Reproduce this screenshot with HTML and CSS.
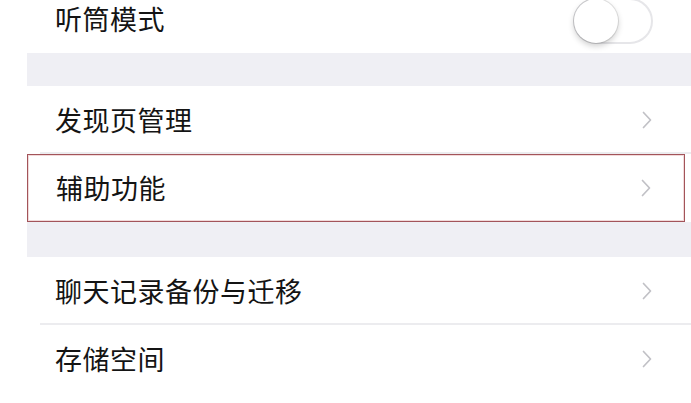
FILE: index.html
```html
<!DOCTYPE html>
<html lang="zh">
<head>
<meta charset="utf-8">
<link rel="stylesheet" href="styles.css">
</head>
<body>
<div class="list">
  <div class="row first">
    <span class="label">听筒模式</span>
    <span class="toggle"><span class="knob"></span></span>
  </div>
  <div class="band first-band"></div>
  <div class="row sep">
    <span class="label">发现页管理</span>
    <svg class="chev" viewBox="0 0 10 18" width="10" height="18"><path d="M1.5 1.5 L8.5 9 L1.5 16.5" fill="none" stroke="#c1c1c6" stroke-width="1.7" stroke-linecap="round" stroke-linejoin="round"/></svg>
  </div>
  <div class="row highlight">
    <span class="label">辅助功能</span>
    <svg class="chev" viewBox="0 0 10 18" width="10" height="18"><path d="M1.5 1.5 L8.5 9 L1.5 16.5" fill="none" stroke="#c1c1c6" stroke-width="1.7" stroke-linecap="round" stroke-linejoin="round"/></svg>
  </div>
  <div class="band"></div>
  <div class="row sep">
    <span class="label">聊天记录备份与迁移</span>
    <svg class="chev" viewBox="0 0 10 18" width="10" height="18"><path d="M1.5 1.5 L8.5 9 L1.5 16.5" fill="none" stroke="#c1c1c6" stroke-width="1.7" stroke-linecap="round" stroke-linejoin="round"/></svg>
  </div>
  <div class="row">
    <span class="label">存储空间</span>
    <svg class="chev" viewBox="0 0 10 18" width="10" height="18"><path d="M1.5 1.5 L8.5 9 L1.5 16.5" fill="none" stroke="#c1c1c6" stroke-width="1.7" stroke-linecap="round" stroke-linejoin="round"/></svg>
  </div>
</div>
</body>
</html>
```
FILE: styles.css
```css
html, body {
  margin: 0;
  padding: 0;
  background: #ffffff;
  overflow: hidden;
}
body {
  font-family: "Noto Sans CJK SC", "Noto Sans", sans-serif;
  width: 691px;
  height: 403px;
}
.list {
  margin-left: 27px;
  display: flex;
  flex-direction: column;
}
.row {
  box-sizing: border-box;
  height: 68px;
  display: flex;
  align-items: center;
  justify-content: space-between;
  padding: 0 39px 0 28px;
  background: #ffffff;
  position: relative;
}
.row.first {
  margin-top: -15px;
}
.label {
  font-size: 27px;
  line-height: 36px;
  color: #141414;
  letter-spacing: 0.5px;
}
.band {
  height: 35px;
  background: #efeff4;
}
.band.first-band {
  height: 33px;
}
.row.sep::after {
  content: "";
  position: absolute;
  left: 13px;
  right: 0;
  bottom: 0;
  height: 2px;
  background: #ececef;
}
.row.highlight {
  border: 1px solid #a3545a;
  box-shadow: inset 0 0 0 1px rgba(214, 150, 150, 0.35);
  margin-right: 6px;
  padding-right: 33px;
}
.chev {
  display: block;
}
.toggle {
  box-sizing: border-box;
  width: 80px;
  height: 46px;
  border-radius: 23px;
  border: 2px solid #e6e6e9;
  background: #ffffff;
  margin-right: -1px;
  margin-top: 4px;
  position: relative;
}
.knob {
  position: absolute;
  left: -1px;
  top: -1px;
  width: 44px;
  height: 44px;
  border-radius: 50%;
  background: #ffffff;
  box-shadow: 0 3px 6px rgba(0, 0, 0, 0.2), 0 0 0 1px rgba(0, 0, 0, 0.1);
}
```
